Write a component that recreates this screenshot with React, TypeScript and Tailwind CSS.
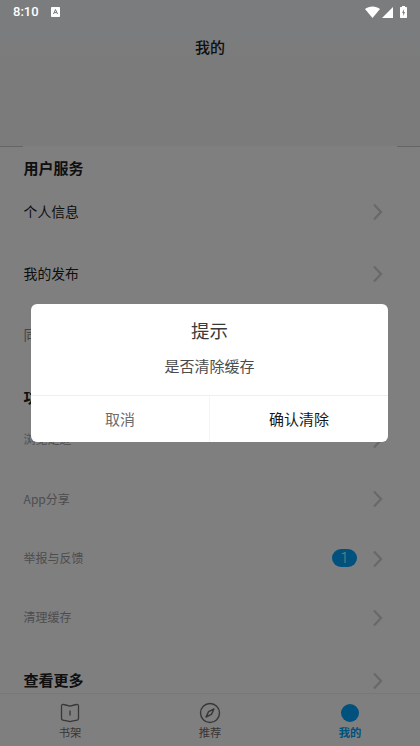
import { ReactNode } from "react";

function Chevron() {
  return (
    <svg viewBox="0 0 10 18" className="mt-px h-[18px] w-[10px] text-[#d2d2d2]" fill="none" stroke="currentColor" strokeWidth="2.4">
      <path d="M1 1.5L8 9L1 16.5" />
    </svg>
  );
}

type RowProps = { label: string; className: string; arrow?: boolean; badge?: number };

function Row({ label, className, arrow = true, badge }: RowProps) {
  return (
    <div className={`flex shrink-0 items-center ${className}`}>
      <span className="flex-1 pl-[0.6px]">{label}</span>
      {badge && (
        <span className="mr-4 flex h-[18px] w-[25px] items-center justify-center rounded-full bg-[#00a2fa] pt-px font-['Roboto'] text-[14px] font-light text-white">
          {badge}
        </span>
      )}
      {arrow && <Chevron />}
    </div>
  );
}

function Tab({ label, active, children }: { label: string; active?: boolean; children: ReactNode }) {
  return (
    <div className={`flex flex-1 flex-col items-center pt-2 text-[11.3px] leading-[17px] ${active ? "font-bold text-[#00a2fa]" : "text-[#6e6e6e]"}`}>
      <div className="flex h-[22px] items-center">{children}</div>
      <span>{label}</span>
    </div>
  );
}

export default function App() {
  return (
    <div className="relative flex h-[746px] w-[420px] flex-col overflow-hidden bg-white font-['Noto_Sans_CJK_SC',sans-serif] text-[#202020]">
      {/* 标题栏 */}
      <header className="flex h-[147px] shrink-0 justify-center border-b border-[#cacaca] bg-linear-to-b from-[#f6f8fa] from-30% to-[#f6f6f6] to-50% pt-[35px]">
        <h1 className="text-[15px] leading-[23px] font-medium">我的</h1>
      </header>

      {/* 列表 */}
      <main className="relative -mt-px flex h-[548px] flex-col overflow-hidden">
        <div className="mx-[23px] flex flex-col bg-white pr-[14px]">
          <Row label="用户服务" className="h-[44px] text-[15px] font-bold" arrow={false} />
          <Row label="个人信息" className="-mt-[10px] h-[62px] text-[13.8px]" />
          <Row label="我的发布" className="h-[62px] text-[13.8px]" />
          <Row label="同步数据" className="h-[61px] text-[13.8px] text-[#8a8a8a]" />
          <Row label="功能服务" className="h-[65px] text-[15px] font-bold" arrow={false} />
          <Row label="浏览足迹" className="-mt-[21px] h-[60px] text-[12px] text-[#9a9ba0]" />
          <Row label="App分享" className="h-[59px] text-[12px] text-[#9a9ba0]" />
          <Row label="举报与反馈" className="h-[60px] text-[12px] text-[#9a9ba0]" badge={1} />
          <Row label="清理缓存" className="h-[58px] text-[12px] text-[#9a9ba0]" />
          <Row label="查看更多" className="h-[68px] text-[15px] font-bold" />
        </div>
      </main>

      {/* 底部导航 */}
      <nav className="relative flex h-[53px] shrink-0 border-t border-[#f0f0f0] bg-white">
        <Tab label="书架">
          <svg viewBox="0 0 22 22" className="size-[22px]" fill="none" stroke="currentColor" strokeWidth="1.3">
            <path d="M2.500 4C2.500 2.800 3.200 2.300 4.500 2.500C7 2.900 9 3.500 11 4.200C13 3.500 15 2.900 17.500 2.500C18.800 2.300 19.500 2.800 19.500 4V16.500C19.500 17.400 19 17.900 18.200 18.100C16 18.600 13.500 18.900 11 19.600C8.500 18.900 6 18.600 3.800 18.100C3 17.900 2.500 17.400 2.500 16.500Z" />
            <path d="M11 8.5V13.5" />
          </svg>
        </Tab>
        <Tab label="推荐">
          <svg viewBox="0 0 22 22" className="size-[22px]" fill="none" stroke="currentColor" strokeWidth="1.4" strokeLinejoin="round">
            <circle cx="11" cy="11" r="9.5" />
            <path d="M15 7L12.4 12.4L7 15L9.6 9.6Z" />
          </svg>
        </Tab>
        <Tab label="我的" active>
          <span className="size-[18px] rounded-full bg-[#00a2fa]" />
        </Tab>
      </nav>

      {/* 遮罩和弹窗 */}
      <div className="absolute inset-0 bg-black/50 pt-[303.5px] pl-[31px]">
        <div className="flex h-[138.5px] w-[357px] flex-col rounded-[6px] bg-white text-center">
          <div className="h-[91.5px] pt-[12px]">
            <h2 className="text-[18.5px] leading-[28px] text-[#3a3a3a]">提示</h2>
            <p className="mt-[10.6px] text-[15px] leading-[23px] text-[#4c4c4c]">是否清除缓存</p>
          </div>
          <div className="flex flex-1 border-t border-[#eee] text-[15px]">
            <button className="flex-1 text-[#6c6c6c]">取消</button>
            <button className="flex-1 border-l border-[#f5f5f5] text-[#181818]">确认清除</button>
          </div>
        </div>
      </div>

      {/* 状态栏 */}
      <div className="absolute inset-x-0 top-0 flex h-6 items-center pr-[13px] pl-[13px] text-white">
        <span className="font-['Roboto',sans-serif] text-[13px] font-medium">8:10</span>
        <svg viewBox="0 0 9 10" className="ml-[12px] h-[10px] w-[9px]">
          <rect width="9" height="10" rx="0.8" fill="#fff" />
          <path d="M2.5 7L4.5 2.5L6.5 7M3.3 5.6H5.7" fill="none" stroke="#777" />
        </svg>
        <div className="ml-auto flex items-center">
          <svg viewBox="0 0 15 12" className="h-[12px] w-[15px]" fill="#fff">
            <path d="M0 3C4 -.4 11 -.4 15 3L7.5 12Z" />
          </svg>
          <svg viewBox="0 0 11 11" className="ml-[2px] h-[11px] w-[11px]" fill="#fff">
            <path d="M11 0V11H0Z" />
          </svg>
          <svg viewBox="0 0 7 12" className="ml-[7px] h-[12px] w-[7px]">
            <path d="M2 0H5V1H6.5L7 1.5V11.5L6.5 12H.5L0 11.5V1.5L.5 1H2Z" fill="#fff" />
            <path d="M4.2 3L2 6.8H3.2V10L5 6H3.8Z" fill="#777" />
          </svg>
        </div>
      </div>
    </div>
  );
}
